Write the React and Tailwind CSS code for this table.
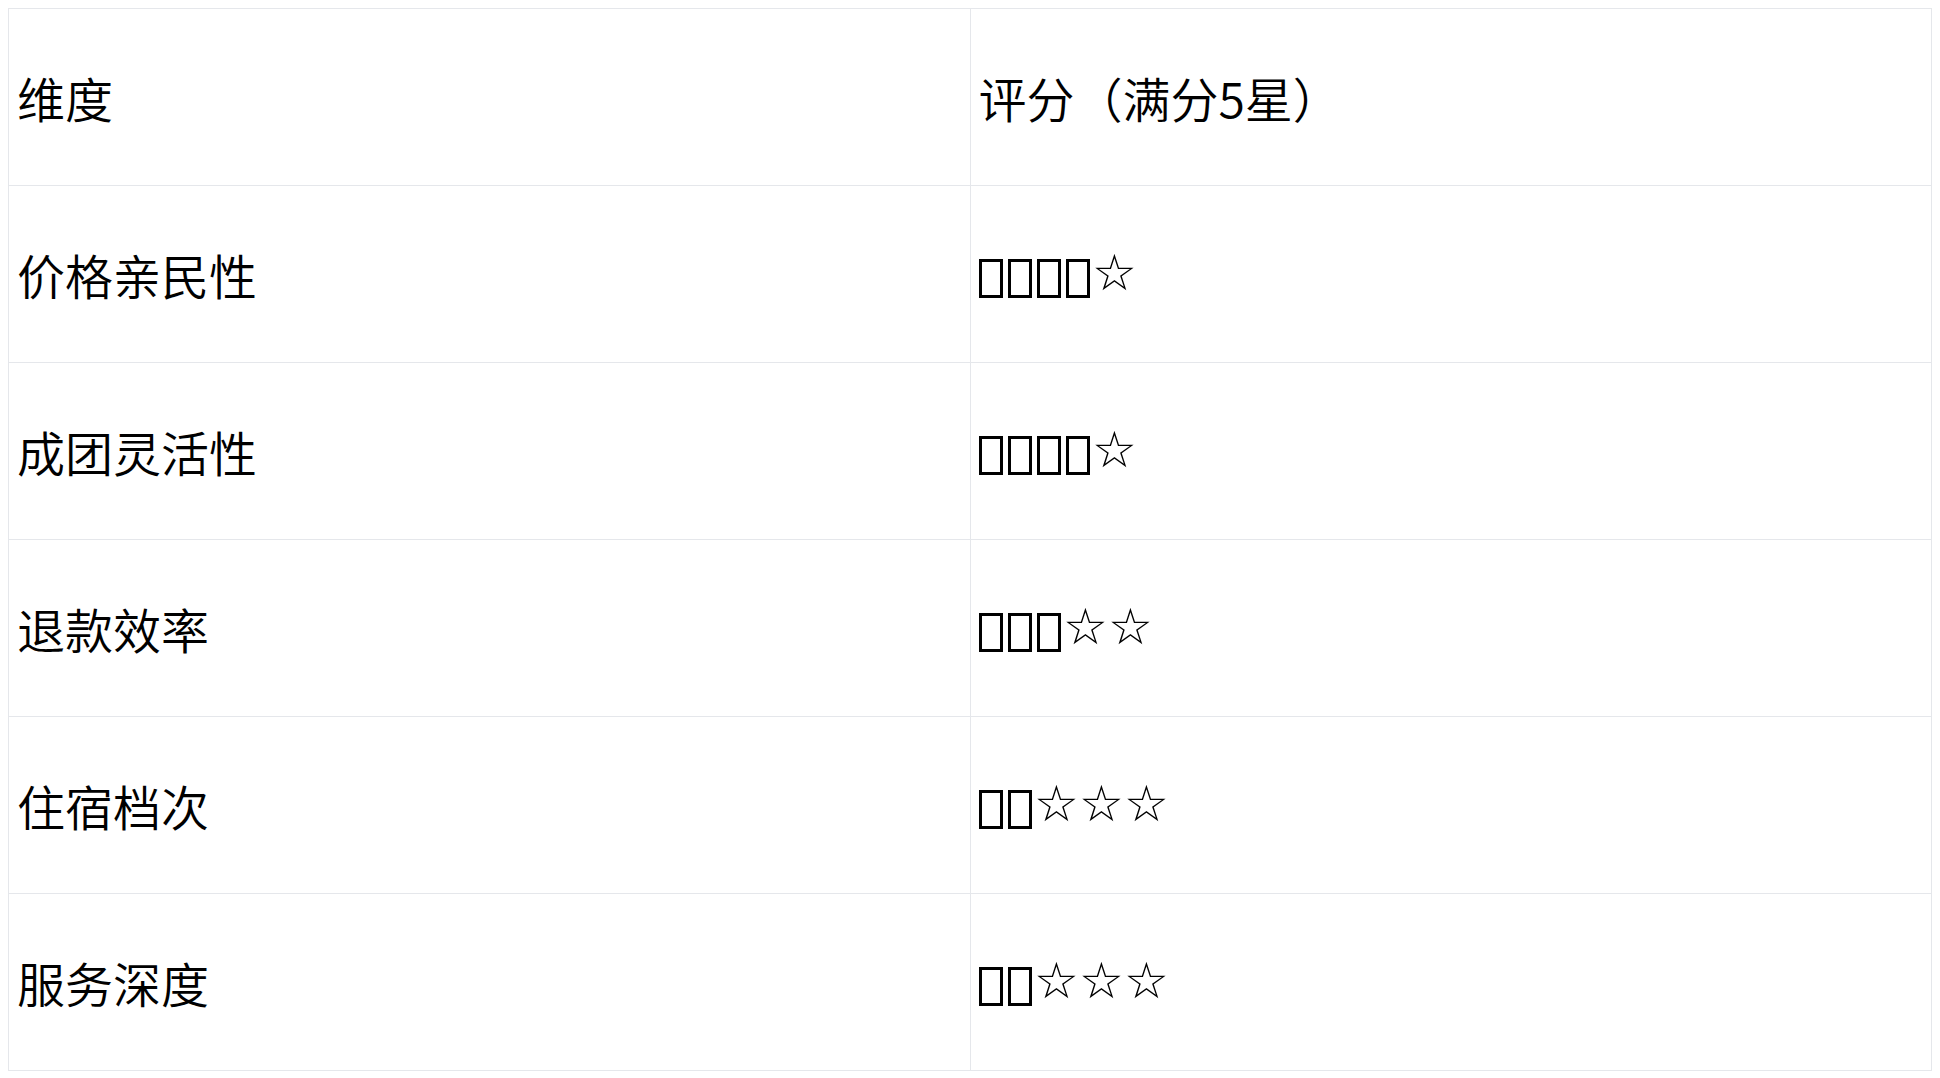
import React from 'react';

const rows = [
  { name: '价格亲民性', full: 4, empty: 1 },
  { name: '成团灵活性', full: 4, empty: 1 },
  { name: '退款效率', full: 3, empty: 2 },
  { name: '住宿档次', full: 2, empty: 3 },
  { name: '服务深度', full: 2, empty: 3 },
];

// filled stars show as missing-glyph boxes in the source
const Stars = ({ full, empty }) => (
  <span className="inline-flex items-center">
    {Array.from({ length: full }).map((_, i) => (
      <span
        key={i}
        className="inline-block w-[24px] h-[39px] mr-[5px] mt-[10px] border-[3px] border-black"
      />
    ))}
    <span className="-ml-[3px] text-[50px]" style={{ fontFamily: '"DejaVu Sans", sans-serif' }}>
      {'☆'.repeat(empty)}
    </span>
  </span>
);

export default function App() {
  return (
    <div className="p-2 h-screen bg-white">
      <table
        className="w-full h-full table-fixed border-collapse border border-[#e5e7eb] text-[48px] font-[350] text-black"
        style={{ fontFamily: '"Noto Sans CJK SC", "DejaVu Sans", sans-serif' }}
      >
        <tbody>
          <tr className="h-[177px]">
            <td className="border border-[#e5e7eb] px-2 align-middle">维度</td>
            <td className="border border-[#e5e7eb] px-2 align-middle">评分（满分5星）</td>
          </tr>
          {rows.map((r) => (
            <tr key={r.name} className="h-[177px]">
              <td className="border border-[#e5e7eb] px-2 align-middle">{r.name}</td>
              <td className="border border-[#e5e7eb] px-2 align-middle">
                <Stars full={r.full} empty={r.empty} />
              </td>
            </tr>
          ))}
        </tbody>
      </table>
    </div>
  );
}
